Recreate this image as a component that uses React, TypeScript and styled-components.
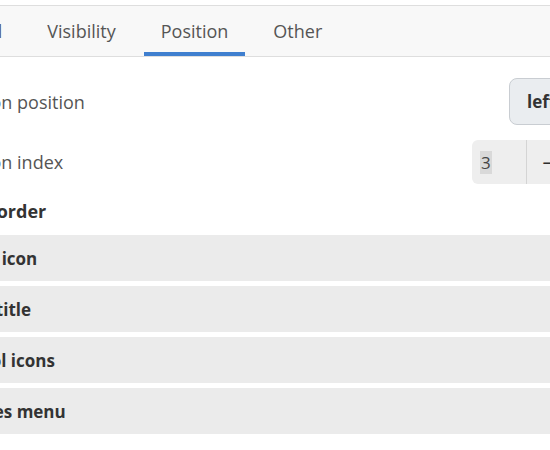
import React from "react";
import styled, { createGlobalStyle } from "styled-components";

const Global = createGlobalStyle`
  html, body { margin: 0; padding: 0; background: #ffffff; overflow: hidden; }
  body { font-family: "Open Sans", "Noto Sans", sans-serif; }
`;

const Page = styled.div`
  width: 700px;
  margin-left: -75px;
  padding-top: 5px;
`;

const TabBar = styled.div`
  display: flex;
  align-items: stretch;
  gap: 11px;
  height: 50px;
  margin-left: -6px;
  background: #f8f8f8;
  border-top: 1px solid #dedede;
  border-bottom: 1px solid #dedede;
`;

const Tab = styled.div<{ $active?: boolean }>`
  display: flex;
  align-items: center;
  justify-content: center;
  padding: 4px 17px 0;
  font-size: 18px;
  color: #555555;
  border-bottom: 4px solid ${(p) => (p.$active ? "#3f7fcf" : "transparent")};
  box-sizing: border-box;
`;

const Content = styled.div`
  display: flex;
  flex-direction: column;
  padding: 21px 10px 0 30px;
`;

const SettingRow = styled.div<{ $height: number }>`
  display: flex;
  align-items: center;
  justify-content: space-between;
  height: ${(p) => p.$height}px;
  margin-bottom: 15px;
`;

const Label = styled.span`
  font-size: 18px;
  color: #555555;
`;

const Dropdown = styled.div`
  display: flex;
  align-items: center;
  box-sizing: border-box;
  width: 106px;
  height: 47px;
  padding-left: 17px;
  background: #eaedf0;
  border: 1px solid #c9cdd2;
  border-radius: 8px;
  font-size: 17px;
  font-weight: 700;
  color: #333333;
`;

const Spin = styled.div`
  display: flex;
  align-items: stretch;
  height: 44px;
  background: #eeeeee;
  border-radius: 6px;
  font-size: 17px;
  color: #333333;
`;

const SpinValue = styled.div`
  display: flex;
  align-items: center;
  width: 55px;
  padding-left: 8px;
  box-sizing: border-box;
  border-right: 1px solid #d4d4d4;
`;

const Selected = styled.span`
  background: #d9d9d9;
  color: #444;
  padding: 0 1px;
`;

const SpinButton = styled.div`
  display: flex;
  align-items: center;
  justify-content: center;
  width: 43px;
  font-size: 22px;
  color: #2e2e2e;
  border-right: 1px solid #d4d4d4;
`;

const SectionTitle = styled.div`
  font-size: 18px;
  font-weight: 700;
  color: #333333;
  height: 24px;
  line-height: 24px;
  margin-bottom: 12px;
`;

const List = styled.div`
  display: flex;
  flex-direction: column;
  gap: 5px;
  margin-left: -30px;
  margin-right: -10px;
`;

const ListItem = styled.div`
  display: flex;
  align-items: center;
  height: 46px;
  padding-left: 18px;
  background: #ebebeb;
  font-size: 17px;
  font-weight: 700;
  color: #333333;
`;

export default function App() {
  return (
    <>
      <Global />
      <Page>
        <TabBar>
          <Tab>General</Tab>
          <Tab>Visibility</Tab>
          <Tab $active>Position</Tab>
          <Tab>Other</Tab>
        </TabBar>
        <Content>
          <SettingRow $height={47}>
            <Label>Button position</Label>
            <Dropdown>left</Dropdown>
          </SettingRow>
          <SettingRow $height={44}>
            <Label>Button index</Label>
            <Spin>
              <SpinValue>
                <Selected>3</Selected>
              </SpinValue>
              <SpinButton>−</SpinButton>
              <SpinButton>+</SpinButton>
            </Spin>
          </SettingRow>
          <SectionTitle>Sort order</SectionTitle>
          <List>
            <ListItem>Finder icon</ListItem>
            <ListItem>Menu title</ListItem>
            <ListItem>Control icons</ListItem>
            <ListItem>Services menu</ListItem>
          </List>
        </Content>
      </Page>
    </>
  );
}
